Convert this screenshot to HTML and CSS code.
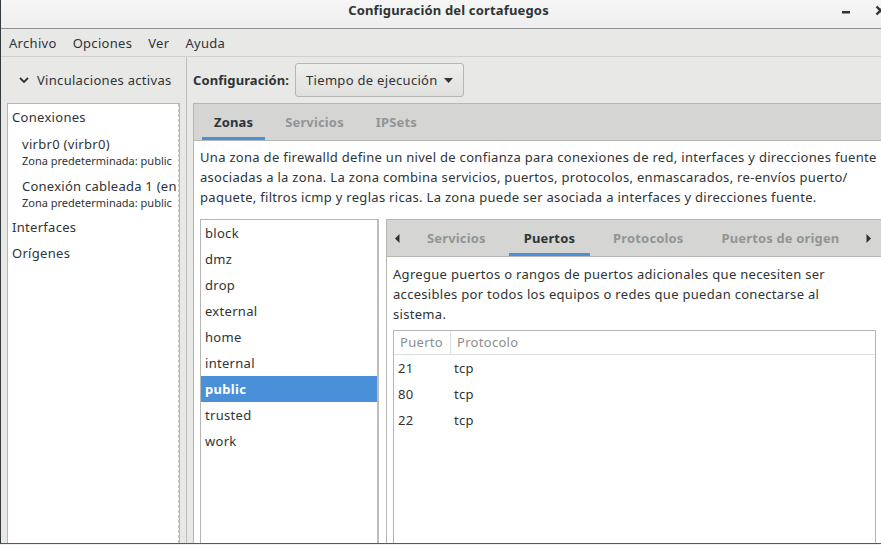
FILE: index.html
```html
<!DOCTYPE html>
<html lang="es">
<head>
<meta charset="utf-8">
<title>Configuración del cortafuegos</title>
<link rel="stylesheet" href="styles.css">
</head>
<body>
<div class="window">
  <header class="titlebar">
    <div class="title">Configuración del cortafuegos</div>
    <div class="wm">
      <span class="wm-btn"><svg width="26" height="20" viewBox="0 0 26 20"><rect x="9" y="11" width="8" height="2.5" fill="#2e3436"/></svg></span>
      <span class="wm-btn"><svg width="26" height="20" viewBox="0 0 26 20"><path d="M9.5 6.5 L17.5 14.5 M17.5 6.5 L9.5 14.5" stroke="#2e3436" stroke-width="2.4" fill="none"/></svg></span>
    </div>
  </header>
  <nav class="menubar">
    <span class="menu-item">Archivo</span>
    <span class="menu-item">Opciones</span>
    <span class="menu-item">Ver</span>
    <span class="menu-item">Ayuda</span>
  </nav>
  <div class="main">
    <aside class="sidebar">
      <div class="sidebar-head">
        <svg class="chev" width="10" height="7" viewBox="0 0 10 7"><polyline points="1,1 5,5 9,1" fill="none" stroke="#2e3436" stroke-width="1.8"/></svg>
        <span>Vinculaciones activas</span>
      </div>
      <div class="bindings">
        <div class="bind-scroll">
          <div class="b-cat">Conexiones</div>
          <div class="b-item first">
            <div class="b-name">virbr0 (virbr0)</div>
            <div class="b-zone">Zona predeterminada: public</div>
          </div>
          <div class="b-item">
            <div class="b-name tight">Conexión cableada 1 (en</div>
            <div class="b-zone">Zona predeterminada: public</div>
          </div>
          <div class="b-cat after-items">Interfaces</div>
          <div class="b-cat">Orígenes</div>
        </div>
      </div>
    </aside>
    <section class="content">
      <div class="toolbar">
        <span class="cfg-label">Configuración:</span>
        <button class="combo">Tiempo de ejecución <svg width="9" height="5" viewBox="0 0 9 5"><polygon points="0,0 9,0 4.5,5" fill="#2e3436"/></svg></button>
      </div>
      <div class="notebook outer">
        <div class="tabs outer-tabs">
          <span class="tab active">Zonas</span>
          <span class="tab">Servicios</span>
          <span class="tab">IPSets</span>
        </div>
        <div class="page outer-page">
          <p class="desc">Una zona de firewalld define un nivel de confianza para conexiones de red, interfaces y direcciones fuente<br>asociadas a la zona. La zona combina servicios, puertos, protocolos, enmascarados, re-envíos puerto/<br>paquete, filtros icmp y reglas ricas. La zona puede ser asociada a interfaces y direcciones fuente.</p>
          <div class="zone-area">
            <ul class="zone-list">
              <li>block</li>
              <li>dmz</li>
              <li>drop</li>
              <li>external</li>
              <li>home</li>
              <li>internal</li>
              <li class="selected">public</li>
              <li>trusted</li>
              <li>work</li>
            </ul>
            <div class="notebook inner">
              <div class="tabs inner-tabs">
                <span class="arrow"><svg width="5" height="9" viewBox="0 0 5 9"><polygon points="4.5,0 4.5,9 0,4.5" fill="#2e3436"/></svg></span>
                <span class="tab wide">Servicios</span>
                <span class="tab wide active">Puertos</span>
                <span class="tab wide">Protocolos</span>
                <span class="tab wide">Puertos de origen</span>
                <span class="arrow"><svg width="5" height="9" viewBox="0 0 5 9"><polygon points="0.5,0 0.5,9 5,4.5" fill="#2e3436"/></svg></span>
              </div>
              <div class="page inner-page">
                <p class="desc">Agregue puertos o rangos de puertos adicionales que necesiten ser<br>accesibles por todos los equipos o redes que puedan conectarse al<br>sistema.</p>
                <div class="ports">
                  <div class="ports-head">
                    <span class="th th-port">Puerto</span>
                    <span class="th">Protocolo</span>
                  </div>
                  <div class="ports-row"><span class="td td-port">21</span><span class="td">tcp</span></div>
                  <div class="ports-row"><span class="td td-port">80</span><span class="td">tcp</span></div>
                  <div class="ports-row"><span class="td td-port">22</span><span class="td">tcp</span></div>
                </div>
              </div>
            </div>
          </div>
        </div>
      </div>
    </section>
  </div>
</div>
</body>
</html>
```
FILE: styles.css
```css
* { box-sizing: border-box; margin: 0; padding: 0; }
html, body { width: 881px; height: 545px; overflow: hidden; }
body {
  background: #f0f0f0;
  font-family: "Noto Sans", "DejaVu Sans", sans-serif;
  font-size: 13px;
  letter-spacing: 0.3px;
  color: #2e3436;
}
.window {
  width: 896px;
  height: 544px;
  border-left: 1px solid #353a3e;
  border-bottom: 1px solid #55595c;
  display: flex;
  flex-direction: column;
  background: #e8e8e7;
}
.titlebar {
  height: 29px;
  flex: none;
  border-bottom: 1px solid #8e9091;
  background: linear-gradient(#f6f6f6, #eeeeee);
  display: grid;
  grid-template-columns: 1fr auto 1fr;
  align-items: start;
}
.title {
  grid-column: 2;
  font-weight: bold;
  letter-spacing: 0.17px;
  line-height: 21px;
}
.wm {
  grid-column: 3;
  justify-self: end;
  display: flex;
  gap: 8px;
  margin-right: 3px;
}
.wm-btn { width: 26px; height: 20px; display: block; }
.wm-btn svg { display: block; }

.menubar {
  height: 28px;
  flex: none;
  border-bottom: 1px solid #d0d0ce;
  display: flex;
  align-items: center;
}
.menu-item { padding: 0 8px; }

.main { flex: 1; display: flex; min-height: 0; }

.sidebar {
  width: 186px;
  flex: none;
  border-right: 1px solid #bdbdbb;
  display: flex;
  flex-direction: column;
}
.sidebar-head {
  height: 46px;
  flex: none;
  display: flex;
  align-items: center;
  gap: 8px;
  padding-left: 18px;
}
.chev { display: block; }
.bindings {
  flex: 1;
  margin: 0 6px;
  background: #fff;
  border: 1px solid #b6b6b3;
  border-bottom: none;
  min-height: 0;
}
.bind-scroll {
  height: 100%;
  border-right: 1px dashed #c8c8c6;
  overflow: hidden;
  white-space: nowrap;
}
.b-cat { height: 26px; line-height: 26px; padding-left: 4px; }
.b-cat.after-items { margin-top: 3px; }
.b-item { padding-left: 14px; margin-top: 8px; }
.b-item.first { margin-top: 5px; }
.b-name { line-height: 18px; }
.b-name.tight { letter-spacing: 0.25px; }
.b-zone { font-size: 11px; line-height: 16px; letter-spacing: 0; }

.content {
  flex: 1;
  min-width: 0;
  display: flex;
  flex-direction: column;
  padding: 0 6px;
}
.toolbar {
  height: 46px;
  flex: none;
  display: flex;
  align-items: center;
  gap: 6px;
}
.cfg-label { font-weight: bold; letter-spacing: 0.1px; }
.combo {
  height: 34px;
  padding: 0 10px;
  border: 1px solid #b6b6b3;
  border-radius: 3px;
  background: linear-gradient(#eeeeed, #e0e0df);
  font: inherit;
  letter-spacing: inherit;
  color: inherit;
  display: flex;
  align-items: center;
  gap: 6px;
}
.combo svg { display: block; }

.notebook {
  border: 1px solid #b6b6b3;
  border-bottom: none;
  background: #fff;
  display: flex;
  flex-direction: column;
  min-height: 0;
}
.notebook.outer { flex: 1; }
.notebook.inner { flex: 1; min-width: 0; }
.tabs {
  height: 37px;
  flex: none;
  background: #d5d5d4;
  border-bottom: 1px solid #b6b6b3;
  display: flex;
  white-space: nowrap;
}
.outer-tabs { padding-left: 4px; }
.tab {
  margin: 0 4px;
  padding: 0 12px;
  font-weight: bold;
  letter-spacing: 0.15px;
  color: #929595;
  display: flex;
  align-items: center;
}
.tab.wide { padding: 0 15px; }
.tab.active {
  color: #2e3436;
  box-shadow: inset 0 -3px #4a90d9;
}
.arrow {
  width: 21px;
  flex: none;
  display: flex;
  align-items: center;
  justify-content: center;
}
.arrow svg { display: block; }

.page { flex: 1; display: flex; flex-direction: column; min-height: 0; }
.outer-page { padding: 6px 6px 0; }
.inner-page { padding: 7px 6px 0; }
.desc { line-height: 20px; white-space: nowrap; }

.zone-area {
  flex: 1;
  display: flex;
  gap: 7px;
  margin-top: 12px;
  min-height: 0;
}
.zone-list {
  width: 179px;
  flex: none;
  list-style: none;
  background: #fff;
  border: 1px solid #b6b6b3;
  border-right: 2px solid #bdbdbb;
  border-bottom: none;
}
.zone-list li { height: 26px; line-height: 26px; padding-left: 4px; }
.zone-list li.selected { background: #4a90d9; color: #fff; font-weight: bold; }

.ports {
  flex: 1;
  margin-top: 6px;
  border: 1px solid #b6b6b3;
  border-bottom: none;
  background: #fff;
}
.ports-head {
  height: 24px;
  display: grid;
  grid-template-columns: 57px 1fr;
  border-bottom: 1px solid #dededc;
  color: #8b8e8f;
}
.th { line-height: 23px; padding-left: 6px; }
.th-port { border-right: 1px solid #dededc; }
.ports-row {
  height: 26px;
  display: grid;
  grid-template-columns: 57px 1fr;
  align-items: center;
}
.td { padding-left: 3px; }
.td-port { padding-left: 4px; }
```
